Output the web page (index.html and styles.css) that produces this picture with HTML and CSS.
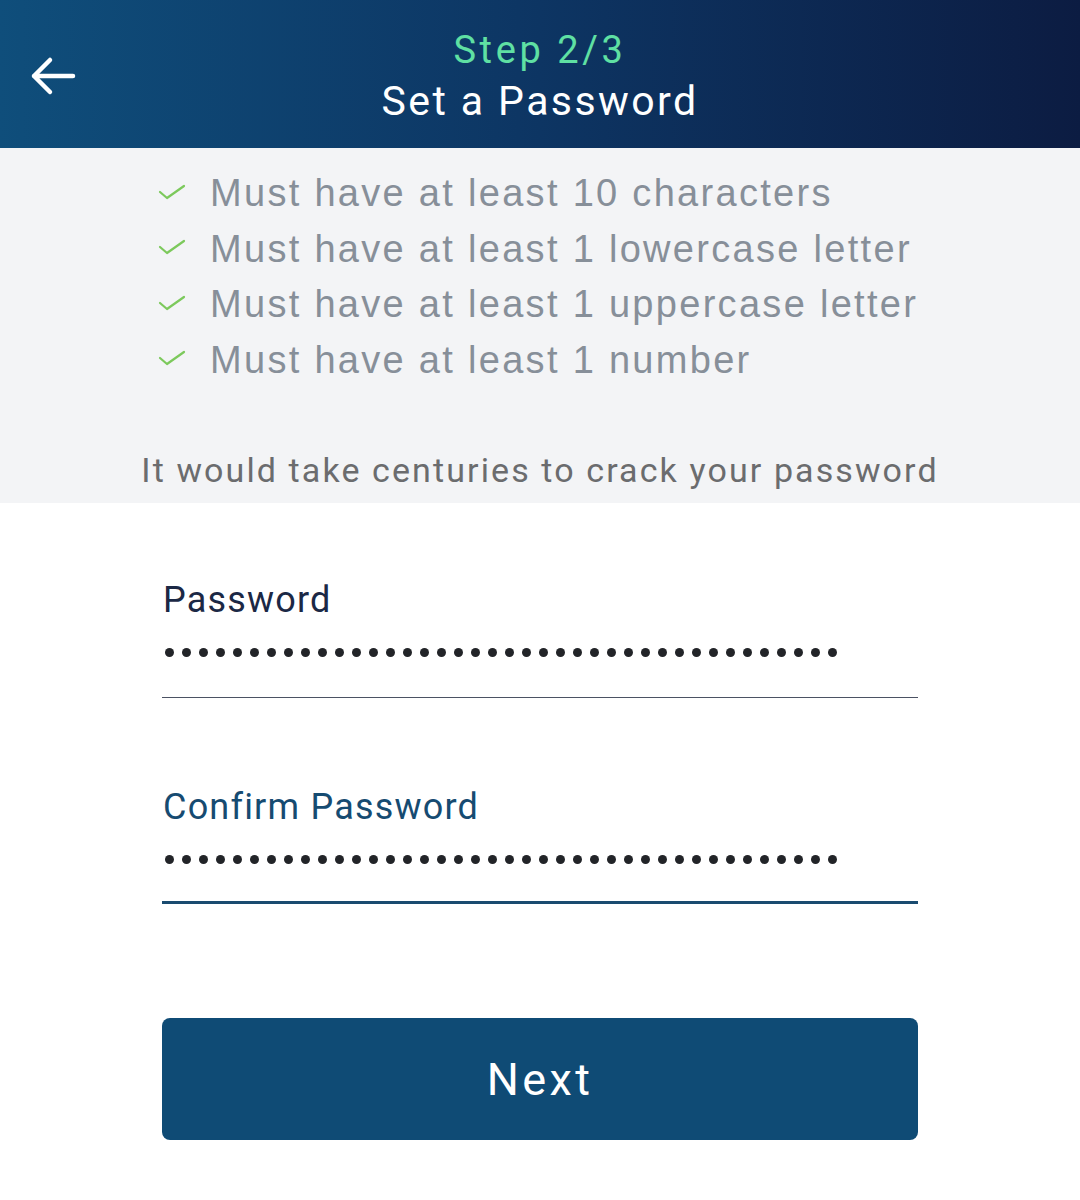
FILE: index.html
```html
<!DOCTYPE html>
<html lang="en">
<head>
    <title>Set a Password</title>
    <link rel="stylesheet" href="styles.css">
</head>
<body>
    <header class="topbar">
        <button class="back" aria-label="Back">
            <svg width="48" height="44" viewBox="0 0 48 44">
                <path d="M5 20 H44 M21 4 L5 20 L21 36" fill="none" stroke="#fff" stroke-width="4.5" stroke-linecap="round" stroke-linejoin="round"/>
            </svg>
        </button>
        <div class="titles">
            <div class="step">Step 2/3</div>
            <div class="title">Set a Password</div>
        </div>
        <div></div>
    </header>

    <section class="rules">
        <ul class="checklist">
            <li><svg class="tick" width="28" height="18" viewBox="0 0 28 18"><path d="M2 9 L9 15 L26 3" fill="none" stroke="#7cc95c" stroke-width="2.2" stroke-linecap="round" stroke-linejoin="round"/></svg>Must have at least 10 characters</li>
            <li><svg class="tick" width="28" height="18" viewBox="0 0 28 18"><path d="M2 9 L9 15 L26 3" fill="none" stroke="#7cc95c" stroke-width="2.2" stroke-linecap="round" stroke-linejoin="round"/></svg>Must have at least 1 lowercase letter</li>
            <li><svg class="tick" width="28" height="18" viewBox="0 0 28 18"><path d="M2 9 L9 15 L26 3" fill="none" stroke="#7cc95c" stroke-width="2.2" stroke-linecap="round" stroke-linejoin="round"/></svg>Must have at least 1 uppercase letter</li>
            <li><svg class="tick" width="28" height="18" viewBox="0 0 28 18"><path d="M2 9 L9 15 L26 3" fill="none" stroke="#7cc95c" stroke-width="2.2" stroke-linecap="round" stroke-linejoin="round"/></svg>Must have at least 1 number</li>
        </ul>
        <p class="strength">It would take centuries to crack your password</p>
    </section>

    <main class="form">
        <div class="field">
            <label class="label">Password</label>
            <div class="dots" id="pw"></div>
        </div>
        <div class="field focused">
            <label class="label">Confirm Password</label>
            <div class="dots" id="pw2"></div>
        </div>
        <button class="next">Next</button>
    </main>

    <script>
        // 40 masked characters in each field
        document.querySelectorAll(".dots").forEach(function(el) {
            for (let i = 0; i < 40; i++) {
                el.appendChild(document.createElement("span"));
            }
        });
    </script>
</body>
</html>
```

FILE: styles.css
```css
body {
    margin: 0;
    padding: 0;
    font-family: Roboto, 'Liberation Sans', sans-serif;
    background: #fff;
    width: 1080px;
}
.topbar {
    height: 148px;
    display: grid;
    grid-template-columns: 108px 1fr 108px;
    align-items: center;
    background: linear-gradient(to right, #0f4e7b, #0d3563 50%, #0c1c42);
}
.back {
    background: none;
    border: none;
    padding: 0 0 0 29px;
    height: 44px;
    display: flex;
    align-items: center;
    margin-top: 8px;
}
.titles {
    text-align: center;
    padding-top: 5px;
}
.step {
    color: #5fe0a3;
    font-size: 38px;
    letter-spacing: 3.6px;
    line-height: 48px;
}
.title {
    color: #fff;
    font-size: 41px;
    letter-spacing: 2.4px;
    line-height: 54px;
}
.rules {
    background: #f3f4f6;
    padding: 18px 0 13px;
}
.checklist {
    list-style: none;
    margin: 0;
    padding: 0 0 0 158px;
}
.checklist li {
    display: flex;
    align-items: center;
    height: 55.5px;
    font-family: 'Liberation Sans', Arial, sans-serif;
    font-size: 38px;
    letter-spacing: 2.3px;
    color: #878f99;
}
.tick {
    margin-right: 24px;
    margin-top: -4px;
}
.strength {
    margin: 62px 0 0;
    text-align: center;
    font-size: 34px;
    line-height: 40px;
    letter-spacing: 2.1px;
    color: #6b6c6e;
}
.form {
    width: 756px;
    margin: 0 auto;
    padding-top: 77px;
}
.field {
    border-bottom: 1px solid #4b5263;
    padding-bottom: 40px;
    margin-bottom: 89px;
}
.field.focused {
    border-bottom: 3px solid #1a4b70;
    padding-bottom: 37px;
    margin-bottom: 114px;
}
.label {
    display: block;
    font-size: 36px;
    line-height: 40px;
    letter-spacing: 1.2px;
    color: #1b2845;
    padding-left: 1px;
}
.focused .label {
    color: #164b71;
}
.dots {
    display: flex;
    gap: 8px;
    margin-top: 28px;
    padding-left: 3px;
    height: 9px;
}
.dots span {
    width: 9px;
    height: 9px;
    border-radius: 50%;
    background: #222428;
}
.next {
    width: 100%;
    height: 122px;
    border: none;
    border-radius: 8px;
    background: #0f4b75;
    color: #fff;
    font-family: Roboto, sans-serif;
    font-size: 45px;
    letter-spacing: 3.4px;
}
```
